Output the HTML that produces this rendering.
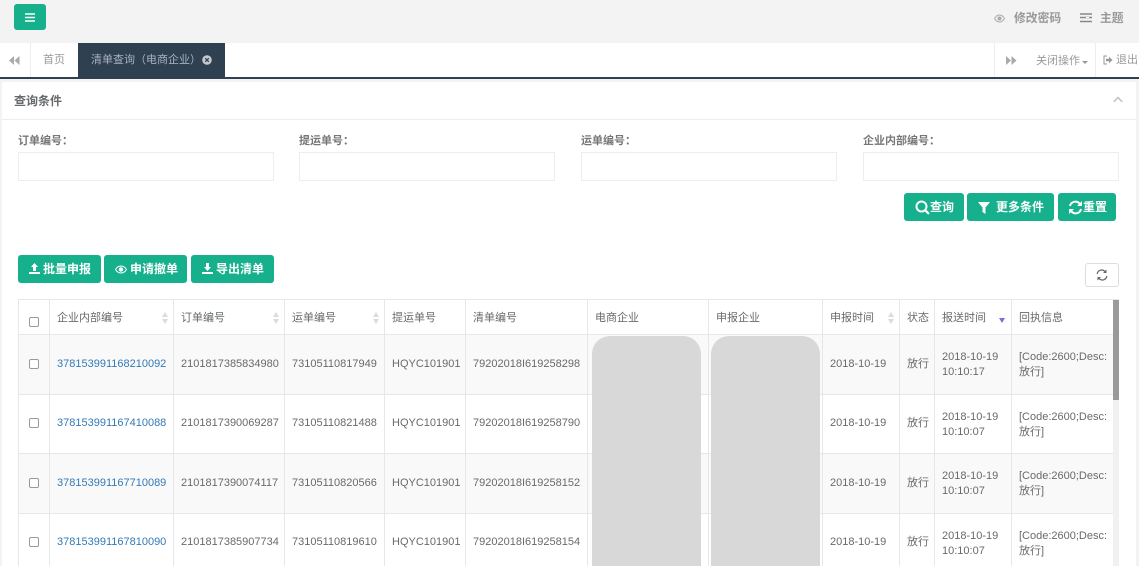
<!DOCTYPE html>
<html lang="zh"><head><meta charset="utf-8"><title>清单查询</title>
<style>
*{box-sizing:border-box}
html,body{margin:0;padding:0;width:1139px;height:566px;overflow:hidden}
body{background:#f3f3f4;font:12px/15px "Liberation Sans","Noto Sans CJK SC",sans-serif;color:#676a6c}
#w{position:absolute;left:0;top:0;width:1139px;height:566px;overflow:hidden;background:#f3f3f4}
.a{position:absolute}
svg{display:block}
.top{left:0;top:0;width:1139px;height:43px;background:#f3f3f4}
.tabs{left:0;top:43px;width:1139px;height:34px;background:#fff}
.line{left:0;top:77px;width:1139px;height:2px;background:#2f4050}
.panel{left:2px;top:82px;width:1134px;height:484px;background:#fff}
.vl{top:43px;width:1px;height:34px;background:#eee}
.btn{background:#16b08d;color:#fff;border-radius:3px;font-size:12px;font-weight:bold;height:28px;line-height:28px;white-space:nowrap}
.btn svg{position:absolute}
.btn span{position:absolute;top:0}
.lbl{top:134px;font-weight:bold;font-size:11px;color:#777}
.inp{top:152px;width:256px;height:29px;border:1px solid #eee;background:#fff}
table{position:absolute;left:18px;top:299px;width:1100px;table-layout:fixed;border-collapse:collapse;font-size:11px;line-height:15px}
td,th{border:1px solid #e7e7e7;padding:0 7px;text-align:left;font-weight:normal;color:#676a6c;white-space:nowrap;overflow:hidden}
th{height:35px;position:relative;font-size:11px;padding-top:2px}
tr.o td{background:#f9f9f9}
tr.r td{height:59.5px}
td.t{padding-top:2px}
td.c,th.c{padding:0;text-align:center}
th.c{padding-top:11px}
td a{color:#337ab7}
.cb{display:inline-block;width:10px;height:10px;border:1px solid #999;border-radius:2px;background:#fff;vertical-align:middle}
.s{position:absolute;right:4px;top:12px;width:7px;height:0}
.s:before,.s:after{content:"";position:absolute;left:0;border-left:3.5px solid transparent;border-right:3.5px solid transparent}
.s:before{top:0;border-bottom:5px solid #dcdcdc}
.s:after{top:7px;border-top:5px solid #dcdcdc}
</style></head><body><div id="w">
<div class="a top"></div>
<div class="a" style="left:14px;top:4px;width:32px;height:26px;background:#16b08d;border-radius:3px"></div>
<svg class="a" style="left:25px;top:13px" width="10" height="9"><path d="M0 1h10M0 4.500h10M0 8h10" stroke="#fff" stroke-width="1.600"/></svg>

<svg class="a" style="left:994px;top:14px" width="11" height="9" viewBox="0 0 11 9"><path d="M.5 4.500C2 2 3.500 1 5.500 1s3.500 1 5 3.500c-1.500 2.500-3 3.500-5 3.500s-3.500-1-5-3.500z" fill="none" stroke="#aaa"/><circle cx="5.500" cy="4.500" r="2" fill="#aaa"/></svg>
<div class="a" style="left:1014px;top:11px;font-size:11.800px;font-weight:bold;color:#999">修改密码</div>
<svg class="a" style="left:1080px;top:13px" width="12" height="10"><path d="M0 1h12M0 4.500h12M0 8.500h12" stroke="#888" stroke-width="1.500"/><path d="M6 4.500h3" stroke="#fff"/></svg>
<div class="a" style="left:1100px;top:11px;font-size:11.800px;font-weight:bold;color:#999">主题</div>

<div class="a tabs"></div>
<div class="a vl" style="left:30px"></div>
<svg class="a" style="left:9px;top:56px" width="11" height="9"><path d="M5 0v9L0 4.500zM10.500 0v9L5.500 4.500z" fill="#aaa"/></svg>
<div class="a" style="left:43px;top:53px;color:#999;font-size:11px">首页</div>
<div class="a" style="left:78px;top:43px;width:147px;height:35px;background:#2f4050"></div>
<div class="a" style="left:91px;top:53px;color:#a7b1c2;font-size:11px;white-space:nowrap">清单查询（电商企业）</div>
<svg class="a" style="left:202px;top:55px" width="10" height="10"><circle cx="5" cy="5" r="4.800" fill="#c4c9d0"/><path d="M3.200 3.200l3.600 3.600M6.800 3.200l-3.600 3.600" stroke="#2f4050" stroke-width="1.300"/></svg>
<div class="a vl" style="left:994px"></div>
<svg class="a" style="left:1006px;top:56px" width="11" height="9"><path d="M0 0v9l5-4.500zM5.500 0v9l5-4.500z" fill="#aaa"/></svg>
<div class="a" style="left:1036px;top:54px;color:#999;font-size:11px;white-space:nowrap">关闭操作</div>
<div class="a" style="left:1082px;top:61px;border-left:3px solid transparent;border-right:3px solid transparent;border-top:3px solid #999"></div>
<div class="a vl" style="left:1095px"></div>
<svg class="a" style="left:1103px;top:55px" width="10" height="10" viewBox="0 0 10 10"><path d="M4 1H1v8h3" fill="none" stroke="#999"/><path d="M3 3.800h3V1.800L9.500 5 6 8.200v-2H3z" fill="#999"/></svg>
<div class="a" style="left:1116px;top:53px;color:#999;font-size:11px;white-space:nowrap">退出</div>
<div class="a line"></div>

<div class="a panel"></div>
<div class="a" style="left:14px;top:94px;font-size:12px;font-weight:bold;color:#676a6c">查询条件</div>
<div class="a" style="left:2px;top:119px;width:1134px;height:1px;background:#eee"></div>
<svg class="a" style="left:1113px;top:96px" width="10" height="7"><path d="M.8 5.800L5 1.500l4.200 4.300" fill="none" stroke="#c4c4c4" stroke-width="1.600"/></svg>

<div class="a lbl" style="left:18px">订单编号：</div><div class="a inp" style="left:18px"></div>
<div class="a lbl" style="left:299px">提运单号：</div><div class="a inp" style="left:299px"></div>
<div class="a lbl" style="left:581px">运单编号：</div><div class="a inp" style="left:581px"></div>
<div class="a lbl" style="left:863px">企业内部编号：</div><div class="a inp" style="left:863px"></div>

<div class="a btn" style="left:904px;top:193px;width:60px"><svg style="left:11px;top:7px" width="15" height="15"><circle cx="6.500" cy="6.500" r="5" fill="none" stroke="#fff" stroke-width="2"/><path d="M10 10l4 4" stroke="#fff" stroke-width="2.200"/></svg><span style="left:26px">查询</span></div>
<div class="a btn" style="left:967px;top:193px;width:87px"><svg style="left:11px;top:9px" width="12" height="12"><path d="M0 0h12L7.500 5.500V12L4.500 10V5.500z" fill="#fff"/></svg><span style="left:29px">更多条件</span></div>
<div class="a btn" style="left:1058px;top:193px;width:58px"><svg style="left:10px;top:7px" width="15" height="15" viewBox="0 0 15 15"><path d="M2 6a5.500 5.500 0 0 1 9.500-2.500M13 9a5.500 5.500 0 0 1-9.500 2.500" fill="none" stroke="#fff" stroke-width="2"/><path d="M14 1v5H9zM1 14V9h5z" fill="#fff"/></svg><span style="left:25px">重置</span></div>

<div class="a btn" style="left:18px;top:255px;width:83px"><svg style="left:11px;top:8px" width="11" height="11"><path d="M5.500 0L9 4H7v4H4V4H2zM0 9h11v2H0z" fill="#fff"/></svg><span style="left:25px">批量申报</span></div>
<div class="a btn" style="left:104px;top:255px;width:83px"><svg style="left:11px;top:10px" width="12" height="9" viewBox="0 0 12 9"><path d="M.5 4.500C2 2 4 1 6 1s4 1 5.500 3.500C10 7 8 8 6 8S2 7 .5 4.500z" fill="none" stroke="#fff"/><circle cx="6" cy="4.500" r="2.200" fill="#fff"/></svg><span style="left:26px">申请撤单</span></div>
<div class="a btn" style="left:191px;top:255px;width:83px"><svg style="left:11px;top:8px" width="11" height="11"><path d="M4 0h3v4h2L5.500 8 2 4h2zM0 9h11v2H0z" fill="#fff"/></svg><span style="left:25px">导出清单</span></div>

<div class="a" style="left:1085px;top:263px;width:34px;height:24px;border:1px solid #ddd;border-radius:3px;background:#fff"></div>
<svg class="a" style="left:1096px;top:269px" width="12" height="12" viewBox="0 0 12 12"><path d="M1.200 5A4.500 4.500 0 0 1 9 2.500M10.800 7A4.500 4.500 0 0 1 3 9.500" fill="none" stroke="#666" stroke-width="1.200"/><path d="M10.500 .5v3.500H7zM1.500 11.500V8H5z" fill="#666"/></svg>

<table>
<colgroup><col style="width:31px"><col style="width:124px"><col style="width:111px"><col style="width:100px"><col style="width:81px"><col style="width:122px"><col style="width:121px"><col style="width:114px"><col style="width:77px"><col style="width:35px"><col style="width:77px"><col style="width:107px"></colgroup>
<tr><th class="c"><span class="cb"></span></th><th>企业内部编号<i class="s"></i></th><th>订单编号<i class="s"></i></th><th>运单编号<i class="s"></i></th><th>提运单号</th><th>清单编号</th><th>电商企业</th><th>申报企业</th><th>申报时间<i class="s"></i></th><th>状态</th><th>报送时间<i style="position:absolute;right:6px;top:18px;border-left:3.500px solid transparent;border-right:3.500px solid transparent;border-top:5px solid #7b6fd8"></i></th><th>回执信息</th></tr>
<tr class="r o"><td class="c"><span class="cb"></span></td><td><a>378153991168210092</a></td><td>2101817385834980</td><td>73105110817949</td><td>HQYC101901</td><td>79202018I619258298</td><td></td><td></td><td>2018-10-19</td><td>放行</td><td class="t">2018-10-19<br>10:10:17</td><td class="t">[Code:2600;Desc:<br>放行]</td></tr>
<tr class="r"><td class="c"><span class="cb"></span></td><td><a>378153991167410088</a></td><td>2101817390069287</td><td>73105110821488</td><td>HQYC101901</td><td>79202018I619258790</td><td></td><td></td><td>2018-10-19</td><td>放行</td><td class="t">2018-10-19<br>10:10:07</td><td class="t">[Code:2600;Desc:<br>放行]</td></tr>
<tr class="r o"><td class="c"><span class="cb"></span></td><td><a>378153991167710089</a></td><td>2101817390074117</td><td>73105110820566</td><td>HQYC101901</td><td>79202018I619258152</td><td></td><td></td><td>2018-10-19</td><td>放行</td><td class="t">2018-10-19<br>10:10:07</td><td class="t">[Code:2600;Desc:<br>放行]</td></tr>
<tr class="r"><td class="c"><span class="cb"></span></td><td><a>378153991167810090</a></td><td>2101817385907734</td><td>73105110819610</td><td>HQYC101901</td><td>79202018I619258154</td><td></td><td></td><td>2018-10-19</td><td>放行</td><td class="t">2018-10-19<br>10:10:07</td><td class="t">[Code:2600;Desc:<br>放行]</td></tr>
</table>
<div class="a" style="left:592px;top:336px;width:109px;height:240px;background:#d8d8d8;border-radius:18px 18px 0 0"></div>
<div class="a" style="left:711px;top:336px;width:109px;height:240px;background:#d8d8d8;border-radius:18px 18px 0 0"></div>
<div class="a" style="left:1113px;top:300px;width:6px;height:100px;background:#9a9a9a"></div>
<div class="a" style="left:1113px;top:400px;width:6px;height:166px;background:#f1f1f1"></div>
</div></body></html>
